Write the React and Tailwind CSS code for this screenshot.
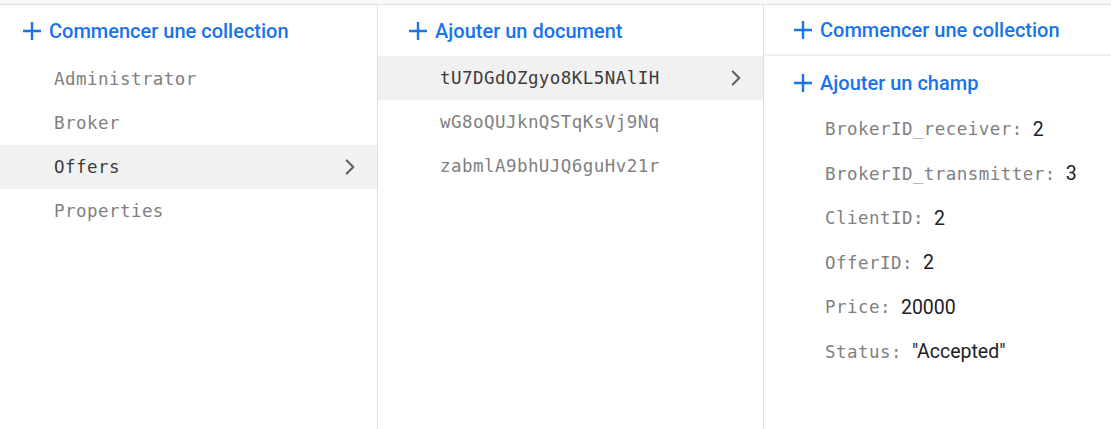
import { ChevronRight } from 'lucide-react'

const mono = "font-['DejaVu_Sans_Mono',monospace] text-[17.5px] tracking-[0.45px]"
const sans = "font-['Roboto','Liberation_Sans',sans-serif]"

function Plus() {
    return (
        <svg width="20" height="20" viewBox="0 0 20 20" className="shrink-0">
            <path d="M10 1v18M1 10h18" stroke="#1a73e8" strokeWidth="2.4" />
        </svg>
    )
}

function AddButton({ label, className = '' }) {
    return (
        <div className={`flex items-center gap-[7px] text-[#1a73e8] text-[20px] font-medium ${sans} ${className}`}>
            <Plus />
            <span>{label}</span>
        </div>
    )
}

function ListRow({ label, selected, pl }) {
    return (
        <div className={`h-[44px] flex items-center justify-between pr-[14px] ${pl} ${selected ? 'bg-[#f1f1f1] text-[#3c3c3c]' : 'text-[#808080]'}`}>
            <span className={mono}>{label}</span>
            {selected && <ChevronRight size={26} strokeWidth={2} className="text-[#5f6368]" />}
        </div>
    )
}

function Field({ name, value }) {
    return (
        <div className="h-[44.5px] flex items-center pl-[61px]">
            <span className={`${mono} text-[#808080]`}>{name}:</span>
            <span className={`${sans} text-[19.5px] text-[#202124] ml-[10px]`}>{value}</span>
        </div>
    )
}

export default function App() {
    return (
        <div className="w-[1111px] h-[429px] bg-white flex flex-col overflow-hidden">
            <div className="h-[5px] bg-[#f8f9fa] border-b border-[#e0e0e0] shrink-0" />
            <div className="flex flex-1">
                <div className="w-[378px] border-r border-[#e0e0e0] flex flex-col">
                    <AddButton label="Commencer une collection" className="h-[51px] pl-[22px]" />
                    <div className="h-[1px]" />
                    <ListRow label="Administrator" pl="pl-[54px]" />
                    <ListRow label="Broker" pl="pl-[54px]" />
                    <ListRow label="Offers" selected pl="pl-[54px]" />
                    <ListRow label="Properties" pl="pl-[54px]" />
                </div>
                <div className="w-[386px] border-r border-[#e0e0e0] flex flex-col">
                    <AddButton label="Ajouter un document" className="h-[51px] pl-[30px]" />
                    <ListRow label="tU7DGdOZgyo8KL5NAlIH" selected pl="pl-[62px]" />
                    <ListRow label="wG8oQUJknQSTqKsVj9Nq" pl="pl-[62px]" />
                    <ListRow label="zabmlA9bhUJQ6guHv21r" pl="pl-[62px]" />
                </div>
                <div className="flex-1 flex flex-col">
                    <AddButton label="Commencer une collection" className="h-[51px] pl-[29px] border-b-2 border-[#f0f0f0]" />
                    <AddButton label="Ajouter un champ" className="h-[51px] pt-[2px] pl-[29px]" />
                    <Field name="BrokerID_receiver" value="2" />
                    <Field name="BrokerID_transmitter" value="3" />
                    <Field name="ClientID" value="2" />
                    <Field name="OfferID" value="2" />
                    <Field name="Price" value="20000" />
                    <Field name="Status" value={'"Accepted"'} />
                </div>
            </div>
        </div>
    )
}
